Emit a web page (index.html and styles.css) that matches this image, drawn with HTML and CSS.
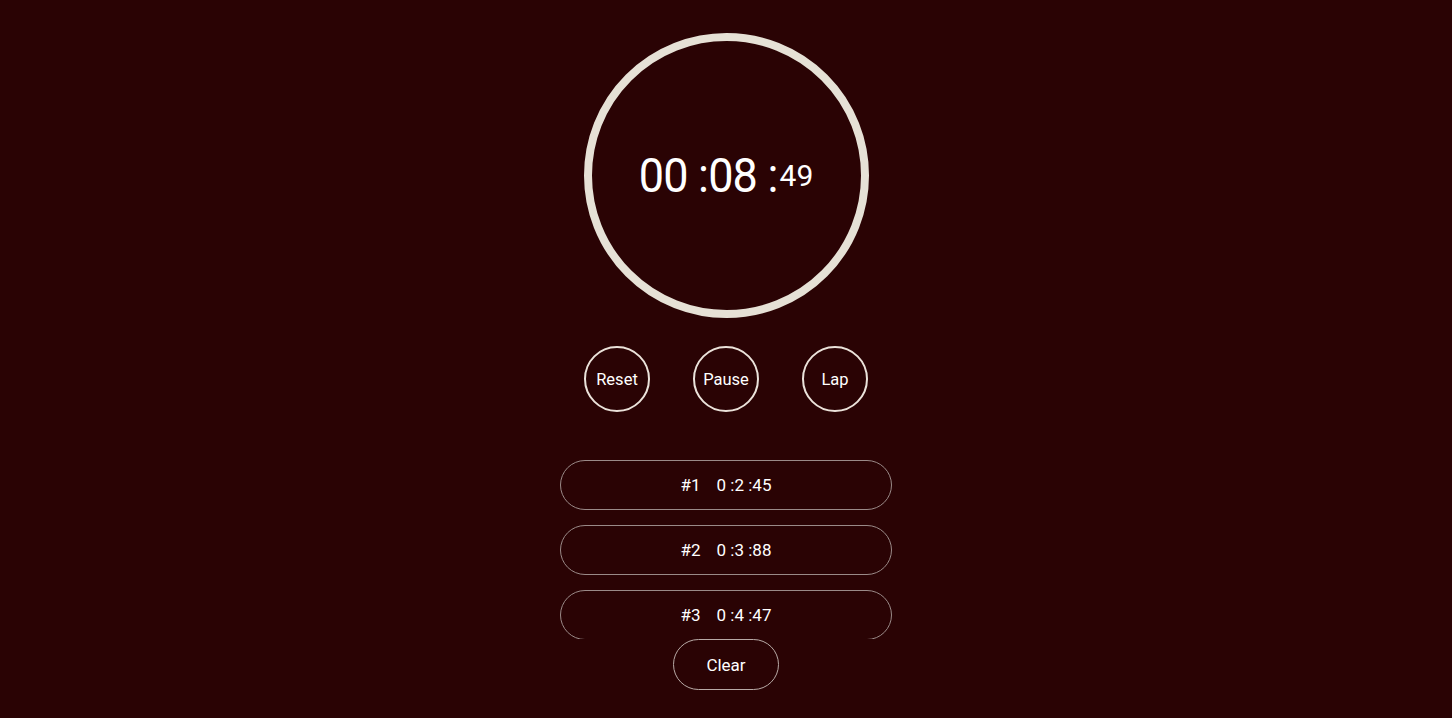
FILE: index.html
```html
<!DOCTYPE html>
<html>
<head>
<meta charset="utf-8">
<link rel="stylesheet" href="styles.css">
</head>
<body>
<main class="app">
  <div class="dial">
    <div class="time"><span class="big">00 :08 :</span><span class="ms">49</span></div>
  </div>
  <div class="controls">
    <button class="round">Reset</button>
    <button class="round">Pause</button>
    <button class="round">Lap</button>
  </div>
  <ul class="laps">
    <li class="lap"><span class="num">#1</span><span>0 :2 :45</span></li>
    <li class="lap"><span class="num">#2</span><span>0 :3 :88</span></li>
    <li class="lap"><span class="num">#3</span><span>0 :4 :47</span></li>
  </ul>
  <button class="clear">Clear</button>
</main>
</body>
</html>
```
FILE: styles.css
```css
html, body {
  margin: 0;
  padding: 0;
  background: #2a0304;
  font-family: Roboto, "Liberation Sans", sans-serif;
  color: #fbf3ec;
}
.app {
  display: flex;
  flex-direction: column;
  align-items: center;
  padding-top: 33px;
}
.dial {
  width: 285px;
  height: 285px;
  box-sizing: border-box;
  border: 8.5px solid #e6e1d6;
  border-radius: 50%;
  display: flex;
  align-items: center;
  justify-content: center;
}
.time {
  display: flex;
  align-items: center;
  color: #ffffff;
  margin-left: 0;
}
.big {
  font-size: 45px;
  letter-spacing: -0.8px;
  white-space: pre;
  transform: scaleY(1.05);
}
.ms {
  font-size: 30px;
  margin-top: -1px;
  margin-left: 2px;
}
.controls {
  display: flex;
  gap: 43px;
  margin-top: 28px;
}
.round {
  width: 66px;
  height: 66px;
  border-radius: 50%;
  border: 2px solid #ebe2da;
  background: transparent;
  color: #ffffff;
  font-family: Roboto, "Liberation Sans", sans-serif;
  font-size: 16.5px;
  padding: 0;
}
.laps {
  list-style: none;
  margin: 48px 0 0;
  padding: 0;
  height: 179px;
  overflow: hidden;
  display: flex;
  flex-direction: column;
  gap: 15px;
}
.lap {
  width: 332px;
  height: 50px;
  flex: none;
  box-sizing: border-box;
  border: 1px solid #9a8a88;
  border-radius: 25px;
  display: flex;
  align-items: center;
  justify-content: center;
  gap: 16px;
  font-size: 17px;
  color: #ffffff;
}
.clear {
  width: 106px;
  height: 51px;
  border-radius: 26px;
  border: 1px solid #b8aaa6;
  background: transparent;
  color: #ffffff;
  font-family: Roboto, "Liberation Sans", sans-serif;
  font-size: 17px;
  padding: 0;
}
```
